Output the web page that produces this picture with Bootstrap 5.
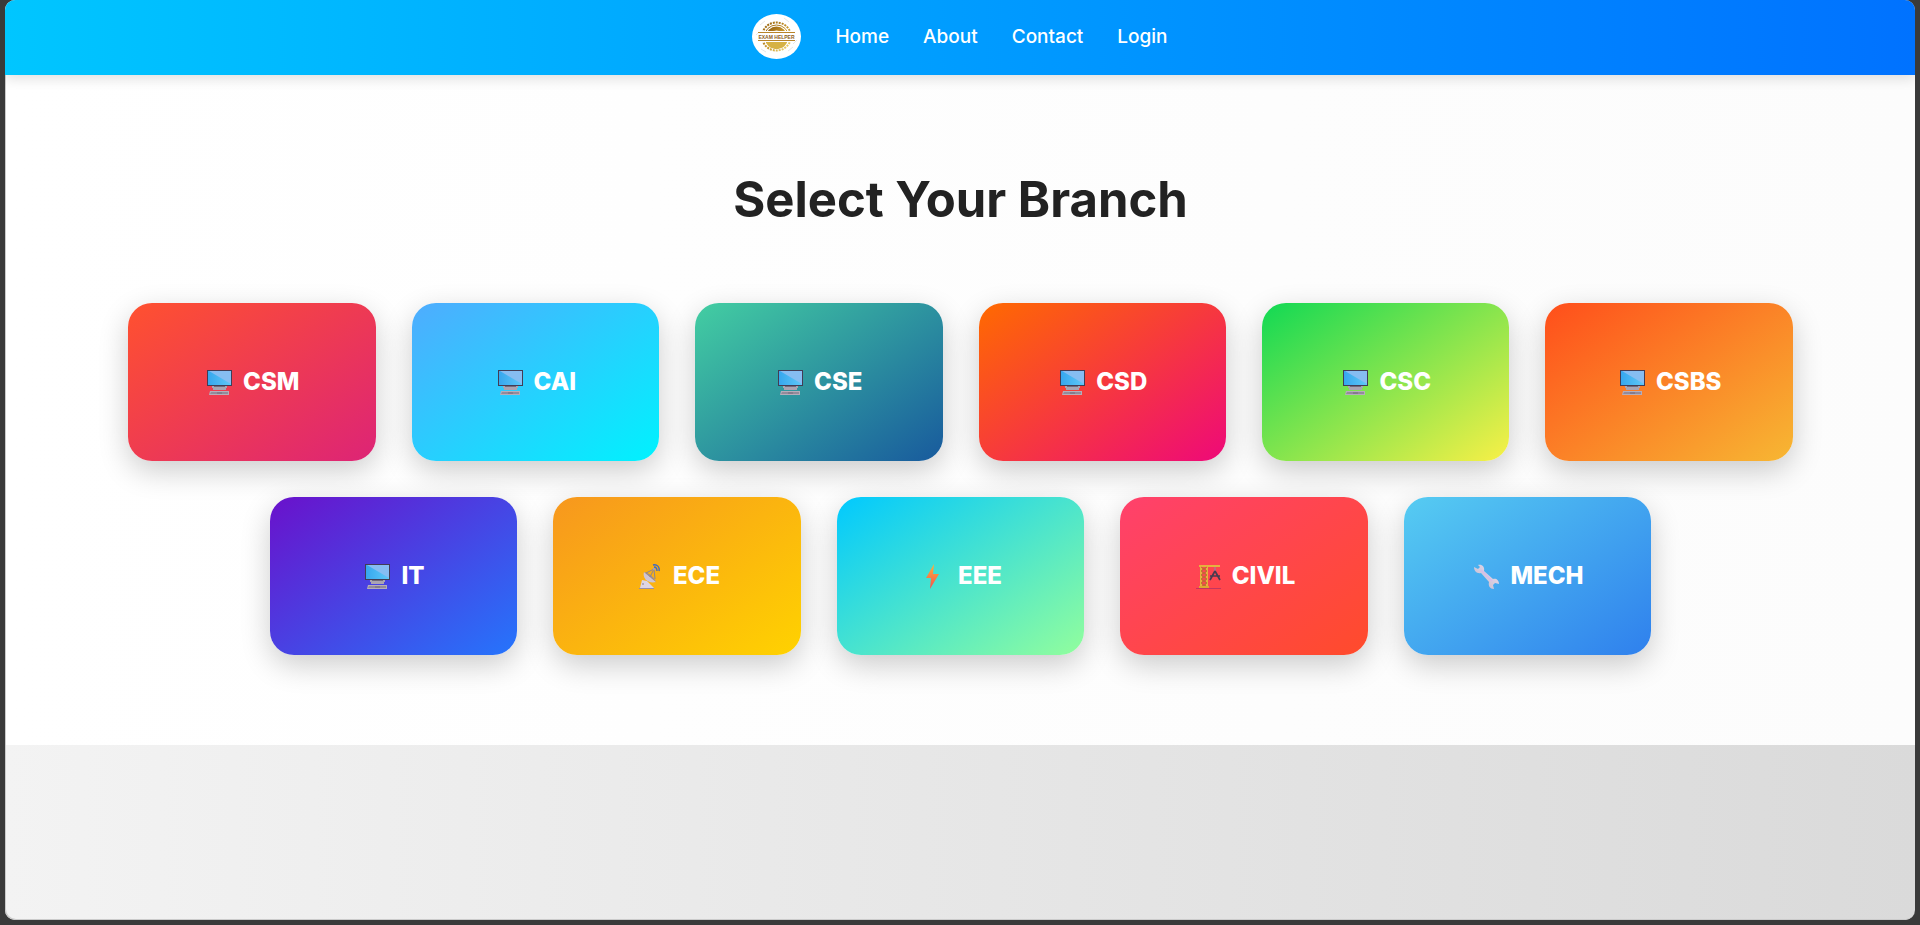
<!DOCTYPE html>
<html lang="en">
<head>
<meta charset="utf-8">
<meta name="viewport" content="width=device-width, initial-scale=1">
<title>Exam Helper - Select Your Branch</title>
<link href="https://cdn.jsdelivr.net/npm/bootstrap@5.3.0/dist/css/bootstrap.min.css" rel="stylesheet">
<style>
  body { background: #3a3a3a; font-family: Inter, "Open Sans", sans-serif; padding: 0 5px 4px; }
  .app-frame { min-height: calc(100vh - 5px); border-radius: 10px; overflow: hidden; background: linear-gradient(90deg, #f3f3f3, #dadada); box-shadow: inset 1px -1px 0 #cbcbcb; }
  .top-bar { background: linear-gradient(90deg, #00c6ff, #0072ff); box-shadow: 0 4px 12px rgba(0,0,0,.12); padding: 14px 0 16px; z-index: 1; gap: 34px; }
  .brand-mark { width: 49px; height: 45px; }
  .menu-links { gap: 34px; }
  .menu-links a { color: #fff; font-size: 19px; font-weight: 500; line-height: 27px; }
  .branches { background: linear-gradient(90deg, #fff, #fcfcfc); padding: 90px 12px; margin-left: 1px; }
  .branches h1 { color: #222; font-size: 49px; font-weight: 700; line-height: 70px; margin-bottom: 68px; }
  .branch-wrap { max-width: 1665px; }
  .branch-grid { --bs-gutter-x: 36px; --bs-gutter-y: 36px; }
  .branch { height: 158px; border-radius: 24px; color: #fff; font-size: 24px; font-weight: 800; box-shadow: 0 10px 30px rgba(0,0,0,.2); gap: 11px; padding-left: 3px; }
  .branch:hover { color: #fff; }
  .branch svg { width: 25px; height: 25px; }
  .csm { background: linear-gradient(145deg, #ff512f, #dd2476); }
  .cai { background: linear-gradient(145deg, #4facfe, #00f2fe); }
  .cse { background: linear-gradient(145deg, #43cea2, #185a9d); }
  .csd { background: linear-gradient(145deg, #ff6a00, #ee0979); }
  .csc { background: linear-gradient(145deg, #11d954, #f9f047); }
  .csbs { background: linear-gradient(145deg, #ff4e1b, #f7b733); }
  .it { background: linear-gradient(145deg, #6a11cb, #2575fc); }
  .ece { background: linear-gradient(145deg, #f7971e, #ffd200); }
  .eee { background: linear-gradient(145deg, #00c9ff, #92fe9d); }
  .civil { background: linear-gradient(145deg, #ff416c, #ff4b2b); }
  .mech { background: linear-gradient(145deg, #56ccf2, #2f80ed); }
</style>
</head>
<body>
<svg class="position-absolute" width="0" height="0" aria-hidden="true">
  <defs>
    <linearGradient id="gold" x1="0" y1="0" x2="1" y2="1"><stop offset="0" stop-color="#94600f"/><stop offset=".55" stop-color="#c9982e"/><stop offset="1" stop-color="#f3df7c"/></linearGradient>
    <linearGradient id="screen"><stop offset="0" stop-color="#36a7ee"/><stop offset="1" stop-color="#5fc8f7"/></linearGradient>
    <linearGradient id="flash" x1="0" y1="0" x2="0" y2="1"><stop offset="0" stop-color="#fbb43c"/><stop offset="1" stop-color="#f4504e"/></linearGradient>
    <linearGradient id="steel" x1="0" y1="1" x2="1" y2="0"><stop offset="0" stop-color="#b9b2c6"/><stop offset="1" stop-color="#eee3f5"/></linearGradient>
  </defs>
  <symbol id="pc" viewBox="0 0 25 25">
    <path d="M0 0h25v16H0z" fill="#433c55"/><path d="M1 1h23v14H1z" fill="url(#screen)"/><path d="M2 1h22v13z" fill="#86bdf2"/>
    <path d="M5 16h15v2h-1v2H6v-2H5z" fill="#aaa4b2"/><path d="M7 16h11v1H7z" fill="#716a7a"/>
    <path d="M3 21h19v4H2z" fill="#b5adba"/><path d="M4 22h17v2H3z" fill="#938b9b"/><path d="M10 23h5" stroke="#766d7e"/>
  </symbol>
  <symbol id="dish" viewBox="0 0 25 25">
    <path d="M3 24l2-8 5 1 7 7z" fill="#ded5e4"/><path d="M2 24h15v1H2z" fill="#9a8fa6"/><circle cx="6" cy="20" r="1" fill="#a398ad"/>
    <path d="M7 8c-2 6 4 12 12 10z" fill="#cfc5d6"/><path d="M7 8c5 1 10 5 12 10L7 8" fill="#958b9f"/>
    <path d="M9 9l8-4 1 10M17 5l-4 8" fill="none" stroke="#8c8395"/><circle cx="17" cy="5" r="1.3" fill="#a9a1b1"/>
    <path d="M16 1c4-1 7 2 6 6M17 3c2 0 3 1 3 4" fill="none" stroke="#3c68c5" stroke-width="1.4"/>
  </symbol>
  <symbol id="bolt" viewBox="0 0 25 25"><path d="M12 0L4 14h5L8 25l9-15h-6l1-10z" fill="url(#flash)"/></symbol>
  <symbol id="crane" viewBox="0 0 25 25">
    <path d="M3 1h21v2H3z" fill="#e6b23e"/><path d="M5 3v20M11 3v20" stroke="#e6b23e" stroke-width="2"/>
    <path d="M5 3l6 4-6 4 6 4-6 4 6 4M11 3L5 7l6 4-6 4 6 4-6 4" fill="none" stroke="#b7742f"/><path d="M3 22h10v2H3z" fill="#dda92f"/>
    <path d="M19 3v4" stroke="#7995b3"/><path d="M19 7l-5 9M19 7l5 9M14 12h10" fill="none" stroke="#493b50" stroke-width="1.7"/><path d="M0 24.5h25" stroke="#c33561"/>
  </symbol>
  <symbol id="wrench" viewBox="0 0 25 25">
    <path d="M4 1c4-1 7 2 6 6l9 8c3-1 6 1 6 5l-4-1-2 2 1 4c-4 0-6-3-5-7L7 9C3 10 0 7 0 3l4 2 2-2z" fill="url(#steel)"/><path d="M7 6l11 11" stroke="#d8bcea" stroke-width="1.5"/>
  </symbol>
</svg>

<div class="app-frame">
  <header class="top-bar d-flex flex-wrap justify-content-center align-items-center position-relative">
    <a href="#" class="d-flex" aria-label="Exam Helper">
      <svg class="brand-mark" viewBox="0 0 49 45">
        <ellipse cx="24.5" cy="22.5" rx="24.5" ry="22.5" fill="#fff"/>
        <path d="M8 11l5-4m19-3l5 4m4 25l-5 4M9 35l5 3M4 21l4-4m37 9l-4 4" stroke="#e7e7e7"/>
        <g fill="none" stroke="url(#gold)">
          <ellipse cx="24.500" cy="22.500" rx="14.500" ry="14" stroke-width="2" stroke-dasharray="2 1"/>
          <ellipse cx="24.500" cy="22.500" rx="12" ry="11.500"/>
          <ellipse cx="24.500" cy="22.500" rx="8.500" ry="8" stroke-width="4"/>
        </g>
        <path d="M6 17h37v11H6z" fill="#fff"/>
        <path d="M6 18.500h37M6 26.500h37" stroke="#b98529"/>
        <path d="M14 28h21c-2 5-6 7-10.500 7S16 33 14 28z" fill="#d6b245"/>
        <text x="24.500" y="24.500" text-anchor="middle" font-family="Liberation Sans, sans-serif" font-weight="700" font-size="5" fill="#8d601b">EXAM HELPER</text>
      </svg>
    </a>
    <nav class="menu-links d-flex" aria-label="Main">
      <a href="#" class="text-decoration-none">Home</a>
      <a href="#" class="text-decoration-none">About</a>
      <a href="#" class="text-decoration-none">Contact</a>
      <a href="#" class="text-decoration-none">Login</a>
    </nav>
  </header>

  <main class="branches">
    <h1 class="text-center">Select Your Branch</h1>
    <div class="branch-wrap mx-auto">
      <div class="row branch-grid justify-content-center">
        <div class="col-12 col-sm-6 col-md-4 col-xl-2"><a href="#" class="branch csm d-flex align-items-center justify-content-center text-decoration-none"><svg aria-hidden="true"><use href="#pc"/></svg>CSM</a></div>
        <div class="col-12 col-sm-6 col-md-4 col-xl-2"><a href="#" class="branch cai d-flex align-items-center justify-content-center text-decoration-none"><svg aria-hidden="true"><use href="#pc"/></svg>CAI</a></div>
        <div class="col-12 col-sm-6 col-md-4 col-xl-2"><a href="#" class="branch cse d-flex align-items-center justify-content-center text-decoration-none"><svg aria-hidden="true"><use href="#pc"/></svg>CSE</a></div>
        <div class="col-12 col-sm-6 col-md-4 col-xl-2"><a href="#" class="branch csd d-flex align-items-center justify-content-center text-decoration-none"><svg aria-hidden="true"><use href="#pc"/></svg>CSD</a></div>
        <div class="col-12 col-sm-6 col-md-4 col-xl-2"><a href="#" class="branch csc d-flex align-items-center justify-content-center text-decoration-none"><svg aria-hidden="true"><use href="#pc"/></svg>CSC</a></div>
        <div class="col-12 col-sm-6 col-md-4 col-xl-2"><a href="#" class="branch csbs d-flex align-items-center justify-content-center text-decoration-none"><svg aria-hidden="true"><use href="#pc"/></svg>CSBS</a></div>
        <div class="col-12 col-sm-6 col-md-4 col-xl-2"><a href="#" class="branch it d-flex align-items-center justify-content-center text-decoration-none"><svg aria-hidden="true"><use href="#pc"/></svg>IT</a></div>
        <div class="col-12 col-sm-6 col-md-4 col-xl-2"><a href="#" class="branch ece d-flex align-items-center justify-content-center text-decoration-none"><svg aria-hidden="true"><use href="#dish"/></svg>ECE</a></div>
        <div class="col-12 col-sm-6 col-md-4 col-xl-2"><a href="#" class="branch eee d-flex align-items-center justify-content-center text-decoration-none"><svg aria-hidden="true"><use href="#bolt"/></svg>EEE</a></div>
        <div class="col-12 col-sm-6 col-md-4 col-xl-2"><a href="#" class="branch civil d-flex align-items-center justify-content-center text-decoration-none"><svg aria-hidden="true"><use href="#crane"/></svg>CIVIL</a></div>
        <div class="col-12 col-sm-6 col-md-4 col-xl-2"><a href="#" class="branch mech d-flex align-items-center justify-content-center text-decoration-none"><svg aria-hidden="true"><use href="#wrench"/></svg>MECH</a></div>
      </div>
    </div>
  </main>
</div>
<script src="https://cdn.jsdelivr.net/npm/bootstrap@5.3.0/dist/js/bootstrap.bundle.min.js"></script>
</body>
</html>
